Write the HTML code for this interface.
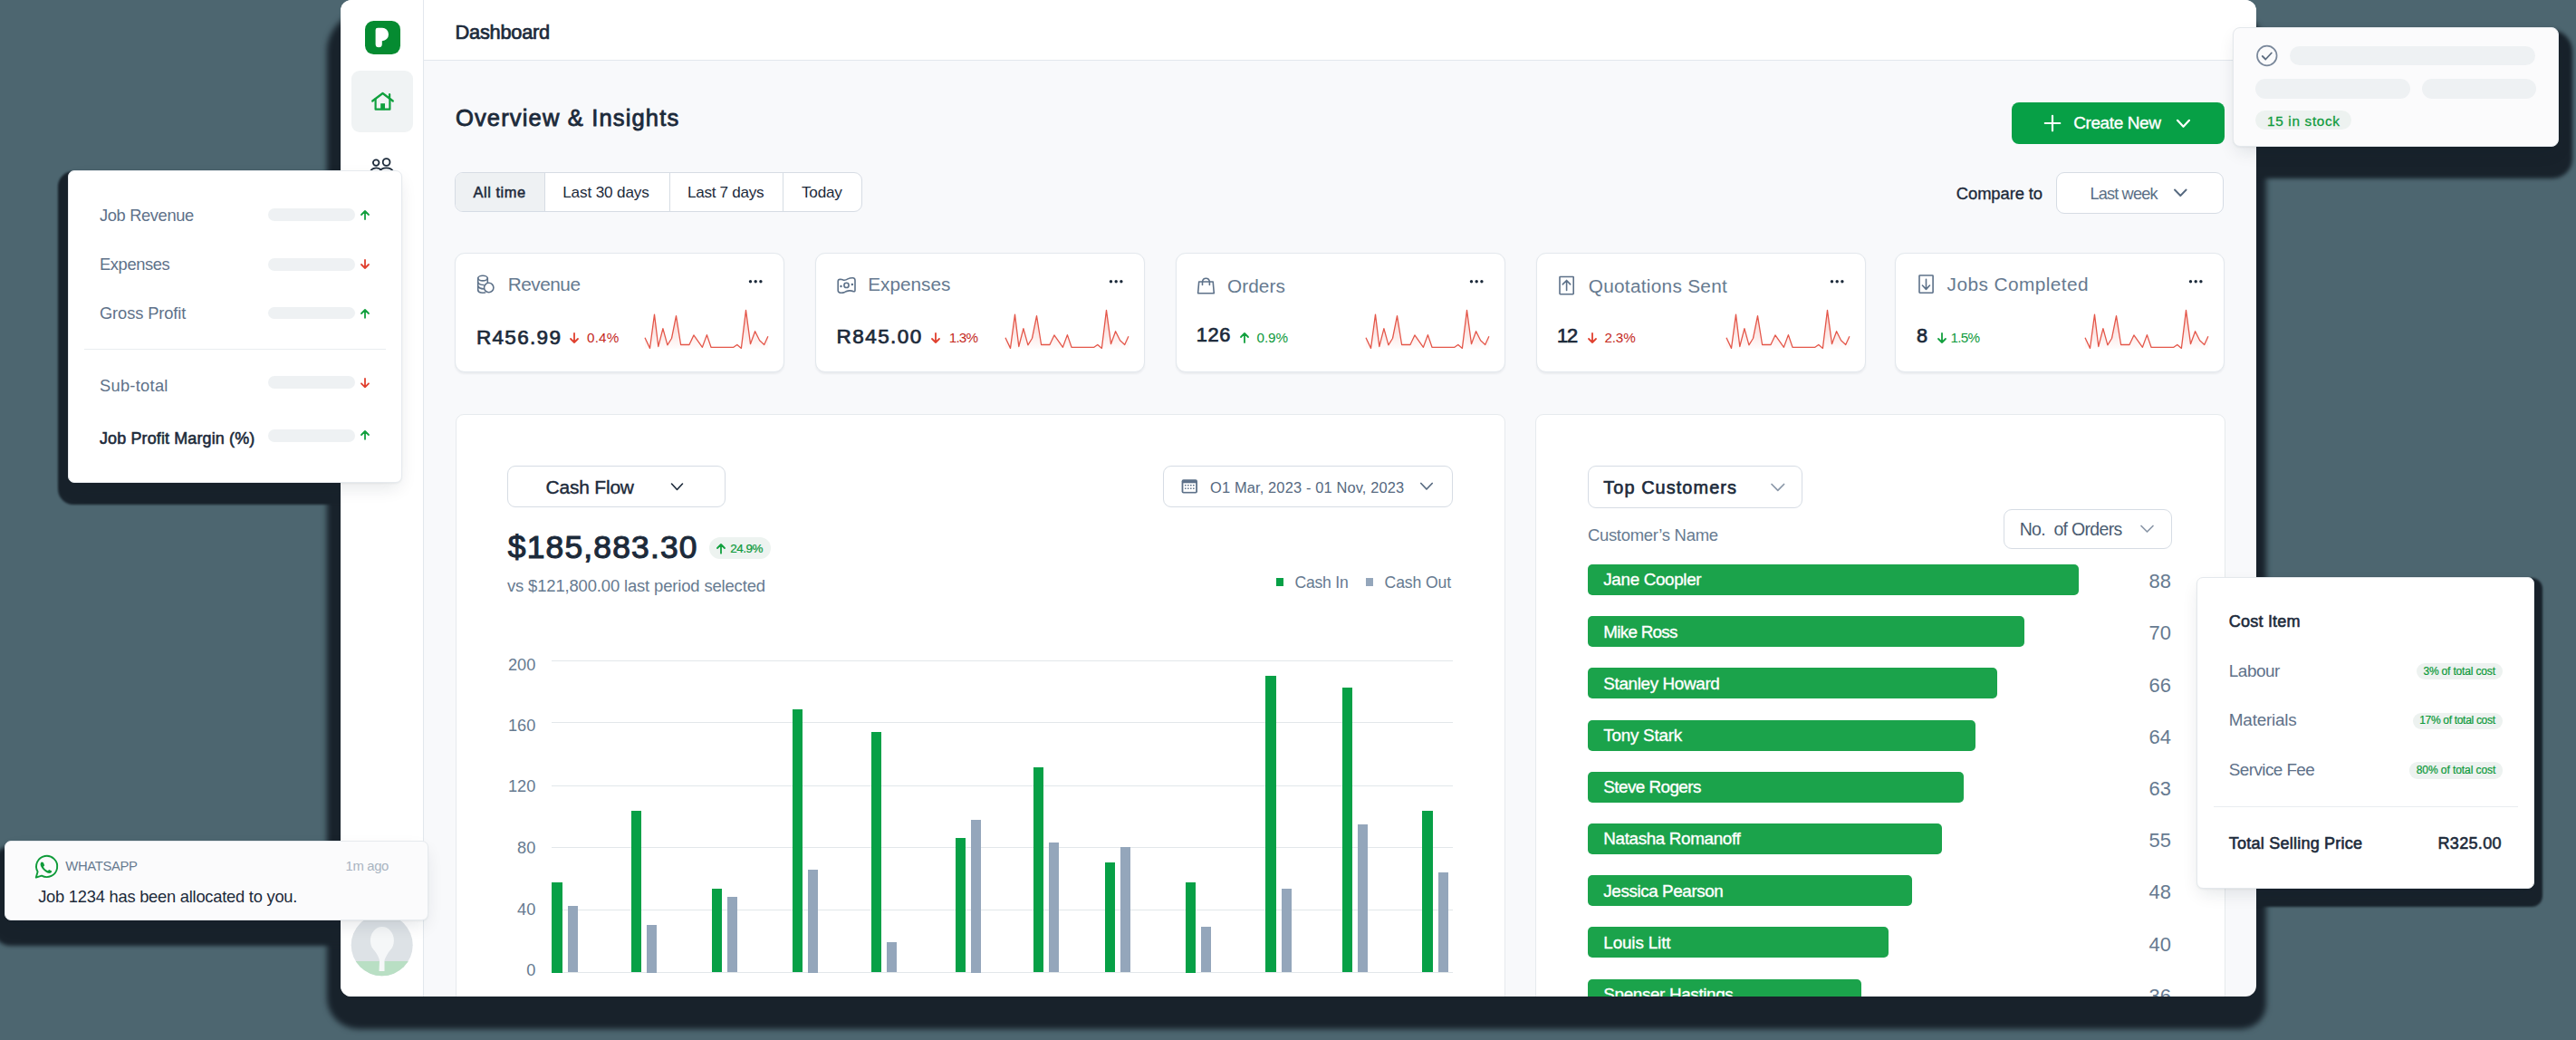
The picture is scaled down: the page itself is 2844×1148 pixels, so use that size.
<!DOCTYPE html>
<html><head><meta charset="utf-8"><style>
html,body{margin:0;padding:0;width:2844px;height:1148px;overflow:hidden;background:#4d6670}
body{position:relative;font-family:"Liberation Sans",sans-serif}
.t{position:absolute;white-space:pre}
</style></head><body>
<div style="position:absolute;left:361.00px;top:12.00px;width:2141.00px;height:1124.00px;background:#18222b;border-radius:45px 45px 28px 35px;filter:blur(3.0px)"></div>
<div style="position:absolute;left:63.50px;top:189.00px;width:436.50px;height:367.50px;background:#18222b;border-radius:17px;filter:blur(1.2px)"></div>
<div style="position:absolute;left:-8.00px;top:934.00px;width:528.00px;height:110.00px;background:#18222b;border-radius:20px;filter:blur(2.0px)"></div>
<div style="position:absolute;left:2440.00px;top:638.00px;width:367.00px;height:363.00px;background:#18222b;border-radius:12px;filter:blur(1.2px)"></div>
<div style="position:absolute;left:2440.00px;top:33.00px;width:400.00px;height:164.00px;background:#18222b;border-radius:22px 24px 22px 12px;filter:blur(2.0px)"></div>
<div style="position:absolute;left:0;top:0;width:2844px;height:1148px;clip-path:inset(0px 353px 48px 376px round 12px)">
<div style="position:absolute;left:376.00px;top:0.00px;width:2115.00px;height:1100.00px;background:#f8f9fb"></div>
<div style="position:absolute;left:376.00px;top:0.00px;width:92.00px;height:1100.00px;background:#ffffff;border-right:1px solid #e2e7ed;box-sizing:border-box"></div>
<div style="position:absolute;left:468.00px;top:0.00px;width:2023.00px;height:67.00px;background:#ffffff;border-bottom:1px solid #e2e7ed;box-sizing:border-box"></div>
<div style="position:absolute;left:403.30px;top:22.80px;width:39.20px;height:37.20px;background:#058b31;border-radius:9.5px"></div>
<svg style="position:absolute;left:403.00px;top:23.00px;overflow:visible" width="38.00" height="38.00" viewBox="403.00 23.00 38.00 38.00"><path d="M414.6 33 Q414.6 30.7 417 30.7 H422 A7 7.25 0 0 1 422 45.2 H421.8 V48.7 A3.6 3.6 0 0 1 414.6 48.7 Z" fill="#ffffff"/></svg>
<div style="position:absolute;left:387.50px;top:77.50px;width:68.50px;height:68.10px;background:#f0f3f4;border-radius:9px"></div>
<svg style="position:absolute;left:405.00px;top:98.00px;overflow:visible" width="35.00" height="28.00" viewBox="405.00 98.00 35.00 28.00"><g fill="none" stroke="#10a03e" stroke-width="2.2" stroke-linecap="round" stroke-linejoin="round"><path d="M411.2 111.5 L422.5 103 L433.8 111.5"/><path d="M414.6 109.2 V120.7 H430.4 V109.2"/><path d="M430.1 104.2 V107.6"/></g><rect x="420.2" y="114.2" width="4.8" height="7" fill="#10a03e"/></svg>
<svg style="position:absolute;left:405.00px;top:170.00px;overflow:visible" width="35.00" height="25.00" viewBox="405.00 170.00 35.00 25.00"><g fill="none" stroke="#1c2a3a" stroke-width="1.8"><circle cx="415.2" cy="179.6" r="3.3"/><circle cx="426.6" cy="179.0" r="3.9"/><path d="M408.5 190 A7 6 0 0 1 421 188"/><path d="M418.5 190 A8.5 7 0 0 1 434.5 190"/></g></svg>
<svg style="position:absolute;left:386.00px;top:1008.00px;overflow:visible" width="72.00" height="74.00" viewBox="386.00 1008.00 72.00 74.00"><defs><clipPath id="avc"><circle cx="421.7" cy="1043.3" r="34"/></clipPath></defs><g clip-path="url(#avc)"><rect x="386" y="1008" width="72" height="74" fill="#dde2e6"/><rect x="386" y="1061" width="72" height="30" fill="#b9dfc4"/><ellipse cx="421.9" cy="1038" rx="13" ry="15" fill="#f5f7f8"/><path d="M410.5 1045 Q418 1055 419 1060 L418.5 1072 L424.5 1072 L424.5 1060 Q426 1055 433.3 1045 Z" fill="#f5f7f8"/></g></svg>
<div style="position:absolute;left:502.00px;top:190.40px;width:450.00px;height:43.20px;background:#ffffff;border:1px solid #d6dce4;border-radius:9px;box-sizing:border-box"></div>
<div style="position:absolute;left:503.00px;top:191.40px;width:97.50px;height:41.20px;background:#eef1f3;border-radius:8px 0 0 8px"></div>
<div style="position:absolute;left:600.50px;top:191.40px;width:1.00px;height:41.20px;background:#d6dce4"></div>
<div style="position:absolute;left:738.50px;top:191.40px;width:1.00px;height:41.20px;background:#d6dce4"></div>
<div style="position:absolute;left:864.40px;top:191.40px;width:1.00px;height:41.20px;background:#d6dce4"></div>
<div style="position:absolute;left:2220.70px;top:112.60px;width:235.40px;height:46.30px;background:#07a046;border-radius:8px"></div>
<svg style="position:absolute;left:2255.00px;top:126.00px;overflow:visible" width="165.00" height="20.00" viewBox="2255.00 126.00 165.00 20.00"><g fill="none" stroke="#ffffff" stroke-width="2.2" stroke-linecap="round" stroke-linejoin="round"><path d="M2266 127.8 V144.3 M2257.8 136 H2274.3"/><path d="M2404 132.8 L2410.5 139.8 L2417 132.8"/></g></svg>
<div style="position:absolute;left:2269.80px;top:190.00px;width:185.70px;height:46.00px;background:#ffffff;border:1px solid #d6dce4;border-radius:9px;box-sizing:border-box"></div>
<svg style="position:absolute;left:2398.00px;top:204.00px;overflow:visible" width="20.00" height="14.00" viewBox="2398.00 204.00 20.00 14.00"><path d="M2401 209.5 L2407.3 216 L2413.6 209.5" fill="none" stroke="#56697f" stroke-width="1.9" stroke-linecap="round" stroke-linejoin="round"/></svg>
<svg width="0" height="0" style="position:absolute"><defs><linearGradient id="sg" x1="0" y1="0" x2="0" y2="1"><stop offset="0" stop-color="#ef8a80" stop-opacity="0.45"/><stop offset="1" stop-color="#ef8a80" stop-opacity="0.02"/></linearGradient></defs></svg>
<div style="position:absolute;left:502.40px;top:279.30px;width:364.00px;height:132.00px;background:#ffffff;border:1px solid #e3e8ed;border-radius:11px;box-sizing:border-box;box-shadow:0 1.5px 2px rgba(30,45,60,0.06)"></div>
<svg style="position:absolute;left:822.40px;top:305.00px;overflow:visible" width="25.00" height="11.00" viewBox="822.40 305.00 25.00 11.00"><g fill="#1c2a3a"><circle cx="828.90" cy="310.7" r="1.7"/><circle cx="834.60" cy="310.7" r="1.7"/><circle cx="840.30" cy="310.7" r="1.7"/></g></svg>
<svg style="position:absolute;left:710.40px;top:338.60px;overflow:visible" width="142.00" height="48.00" viewBox="710.40 338.60 142.00 48.00"><polygon points="712.40,372.30 717.90,384.00 722.90,346.70 727.20,382.10 732.30,362.20 737.30,380.50 741.90,373.10 746.90,348.20 752.00,380.10 761.40,380.10 766.30,369.50 775.80,382.90 780.80,369.20 785.40,382.90 810.30,382.90 814.20,380.10 818.80,384.00 823.90,342.00 828.90,379.30 834.00,365.30 839.00,375.40 844.10,380.10 848.30,370.80 848.30,384.60 712.40,384.60" fill="url(#sg)"/><polyline points="712.40,372.30 717.90,384.00 722.90,346.70 727.20,382.10 732.30,362.20 737.30,380.50 741.90,373.10 746.90,348.20 752.00,380.10 761.40,380.10 766.30,369.50 775.80,382.90 780.80,369.20 785.40,382.90 810.30,382.90 814.20,380.10 818.80,384.00 823.90,342.00 828.90,379.30 834.00,365.30 839.00,375.40 844.10,380.10 848.30,370.80" fill="none" stroke="#e4574a" stroke-width="1.3" stroke-linejoin="round"/></svg>
<div style="position:absolute;left:900.20px;top:279.30px;width:364.00px;height:132.00px;background:#ffffff;border:1px solid #e3e8ed;border-radius:11px;box-sizing:border-box;box-shadow:0 1.5px 2px rgba(30,45,60,0.06)"></div>
<svg style="position:absolute;left:1220.20px;top:305.00px;overflow:visible" width="25.00" height="11.00" viewBox="1220.20 305.00 25.00 11.00"><g fill="#1c2a3a"><circle cx="1226.70" cy="310.7" r="1.7"/><circle cx="1232.40" cy="310.7" r="1.7"/><circle cx="1238.10" cy="310.7" r="1.7"/></g></svg>
<svg style="position:absolute;left:1108.20px;top:338.60px;overflow:visible" width="142.00" height="48.00" viewBox="1108.20 338.60 142.00 48.00"><polygon points="1110.20,372.30 1115.70,384.00 1120.70,346.70 1125.00,382.10 1130.10,362.20 1135.10,380.50 1139.70,373.10 1144.70,348.20 1149.80,380.10 1159.20,380.10 1164.10,369.50 1173.60,382.90 1178.60,369.20 1183.20,382.90 1208.10,382.90 1212.00,380.10 1216.60,384.00 1221.70,342.00 1226.70,379.30 1231.80,365.30 1236.80,375.40 1241.90,380.10 1246.10,370.80 1246.10,384.60 1110.20,384.60" fill="url(#sg)"/><polyline points="1110.20,372.30 1115.70,384.00 1120.70,346.70 1125.00,382.10 1130.10,362.20 1135.10,380.50 1139.70,373.10 1144.70,348.20 1149.80,380.10 1159.20,380.10 1164.10,369.50 1173.60,382.90 1178.60,369.20 1183.20,382.90 1208.10,382.90 1212.00,380.10 1216.60,384.00 1221.70,342.00 1226.70,379.30 1231.80,365.30 1236.80,375.40 1241.90,380.10 1246.10,370.80" fill="none" stroke="#e4574a" stroke-width="1.3" stroke-linejoin="round"/></svg>
<div style="position:absolute;left:1297.50px;top:279.30px;width:364.00px;height:132.00px;background:#ffffff;border:1px solid #e3e8ed;border-radius:11px;box-sizing:border-box;box-shadow:0 1.5px 2px rgba(30,45,60,0.06)"></div>
<svg style="position:absolute;left:1617.50px;top:305.00px;overflow:visible" width="25.00" height="11.00" viewBox="1617.50 305.00 25.00 11.00"><g fill="#1c2a3a"><circle cx="1624.00" cy="310.7" r="1.7"/><circle cx="1629.70" cy="310.7" r="1.7"/><circle cx="1635.40" cy="310.7" r="1.7"/></g></svg>
<svg style="position:absolute;left:1505.50px;top:338.60px;overflow:visible" width="142.00" height="48.00" viewBox="1505.50 338.60 142.00 48.00"><polygon points="1507.50,372.30 1513.00,384.00 1518.00,346.70 1522.30,382.10 1527.40,362.20 1532.40,380.50 1537.00,373.10 1542.00,348.20 1547.10,380.10 1556.50,380.10 1561.40,369.50 1570.90,382.90 1575.90,369.20 1580.50,382.90 1605.40,382.90 1609.30,380.10 1613.90,384.00 1619.00,342.00 1624.00,379.30 1629.10,365.30 1634.10,375.40 1639.20,380.10 1643.40,370.80 1643.40,384.60 1507.50,384.60" fill="url(#sg)"/><polyline points="1507.50,372.30 1513.00,384.00 1518.00,346.70 1522.30,382.10 1527.40,362.20 1532.40,380.50 1537.00,373.10 1542.00,348.20 1547.10,380.10 1556.50,380.10 1561.40,369.50 1570.90,382.90 1575.90,369.20 1580.50,382.90 1605.40,382.90 1609.30,380.10 1613.90,384.00 1619.00,342.00 1624.00,379.30 1629.10,365.30 1634.10,375.40 1639.20,380.10 1643.40,370.80" fill="none" stroke="#e4574a" stroke-width="1.3" stroke-linejoin="round"/></svg>
<div style="position:absolute;left:1695.60px;top:279.30px;width:364.00px;height:132.00px;background:#ffffff;border:1px solid #e3e8ed;border-radius:11px;box-sizing:border-box;box-shadow:0 1.5px 2px rgba(30,45,60,0.06)"></div>
<svg style="position:absolute;left:2015.60px;top:305.00px;overflow:visible" width="25.00" height="11.00" viewBox="2015.60 305.00 25.00 11.00"><g fill="#1c2a3a"><circle cx="2022.10" cy="310.7" r="1.7"/><circle cx="2027.80" cy="310.7" r="1.7"/><circle cx="2033.50" cy="310.7" r="1.7"/></g></svg>
<svg style="position:absolute;left:1903.60px;top:338.60px;overflow:visible" width="142.00" height="48.00" viewBox="1903.60 338.60 142.00 48.00"><polygon points="1905.60,372.30 1911.10,384.00 1916.10,346.70 1920.40,382.10 1925.50,362.20 1930.50,380.50 1935.10,373.10 1940.10,348.20 1945.20,380.10 1954.60,380.10 1959.50,369.50 1969.00,382.90 1974.00,369.20 1978.60,382.90 2003.50,382.90 2007.40,380.10 2012.00,384.00 2017.10,342.00 2022.10,379.30 2027.20,365.30 2032.20,375.40 2037.30,380.10 2041.50,370.80 2041.50,384.60 1905.60,384.60" fill="url(#sg)"/><polyline points="1905.60,372.30 1911.10,384.00 1916.10,346.70 1920.40,382.10 1925.50,362.20 1930.50,380.50 1935.10,373.10 1940.10,348.20 1945.20,380.10 1954.60,380.10 1959.50,369.50 1969.00,382.90 1974.00,369.20 1978.60,382.90 2003.50,382.90 2007.40,380.10 2012.00,384.00 2017.10,342.00 2022.10,379.30 2027.20,365.30 2032.20,375.40 2037.30,380.10 2041.50,370.80" fill="none" stroke="#e4574a" stroke-width="1.3" stroke-linejoin="round"/></svg>
<div style="position:absolute;left:2092.20px;top:279.30px;width:364.00px;height:132.00px;background:#ffffff;border:1px solid #e3e8ed;border-radius:11px;box-sizing:border-box;box-shadow:0 1.5px 2px rgba(30,45,60,0.06)"></div>
<svg style="position:absolute;left:2412.20px;top:305.00px;overflow:visible" width="25.00" height="11.00" viewBox="2412.20 305.00 25.00 11.00"><g fill="#1c2a3a"><circle cx="2418.70" cy="310.7" r="1.7"/><circle cx="2424.40" cy="310.7" r="1.7"/><circle cx="2430.10" cy="310.7" r="1.7"/></g></svg>
<svg style="position:absolute;left:2300.20px;top:338.60px;overflow:visible" width="142.00" height="48.00" viewBox="2300.20 338.60 142.00 48.00"><polygon points="2302.20,372.30 2307.70,384.00 2312.70,346.70 2317.00,382.10 2322.10,362.20 2327.10,380.50 2331.70,373.10 2336.70,348.20 2341.80,380.10 2351.20,380.10 2356.10,369.50 2365.60,382.90 2370.60,369.20 2375.20,382.90 2400.10,382.90 2404.00,380.10 2408.60,384.00 2413.70,342.00 2418.70,379.30 2423.80,365.30 2428.80,375.40 2433.90,380.10 2438.10,370.80 2438.10,384.60 2302.20,384.60" fill="url(#sg)"/><polyline points="2302.20,372.30 2307.70,384.00 2312.70,346.70 2317.00,382.10 2322.10,362.20 2327.10,380.50 2331.70,373.10 2336.70,348.20 2341.80,380.10 2351.20,380.10 2356.10,369.50 2365.60,382.90 2370.60,369.20 2375.20,382.90 2400.10,382.90 2404.00,380.10 2408.60,384.00 2413.70,342.00 2418.70,379.30 2423.80,365.30 2428.80,375.40 2433.90,380.10 2438.10,370.80" fill="none" stroke="#e4574a" stroke-width="1.3" stroke-linejoin="round"/></svg>
<svg style="position:absolute;left:520.00px;top:298.00px;overflow:visible" width="32.00" height="32.00" viewBox="520.00 298.00 32.00 32.00"><g fill="none" stroke="#5d7189" stroke-width="1.6" stroke-linecap="round" stroke-linejoin="round"><ellipse cx="533" cy="307.1" rx="5.3" ry="2.8"/><path d="M527.7 307.1 V320.5"/><path d="M538.3 307.1 V311.6"/><path d="M527.7 311.8 Q529.3 314.4 533.8 314.5"/><path d="M527.7 316.3 Q529.3 318.7 533.4 318.9"/><path d="M527.7 320.5 Q528.4 323.2 533 323.2 L535.6 323"/><circle cx="539.7" cy="317.5" r="5.2"/></g></svg>
<svg style="position:absolute;left:920.00px;top:300.00px;overflow:visible" width="30.00" height="32.00" viewBox="920.00 300.00 30.00 32.00"><g fill="none" stroke="#5d7189" stroke-width="1.6" stroke-linecap="round" stroke-linejoin="round"><path d="M925.2 310.5 Q925.2 308.4 927.5 308.3 Q929.3 308.6 931 309.1 Q933.5 309.6 936 307.9 Q938.5 306.7 941.5 306.8 Q944 307.1 944 309.5 V320.2 Q944 322.2 942.3 321.7 Q940.2 320.7 937.6 320.9 Q935 321.2 932.6 322.4 Q930 323.5 927.5 323.1 Q925.2 322.6 925.2 320.5 Z"/><circle cx="934.5" cy="314.9" r="2.6"/></g><circle cx="928.5" cy="315.9" r="1.25" fill="#5d7189"/><circle cx="940.9" cy="314" r="1.25" fill="#5d7189"/></svg>
<svg style="position:absolute;left:1318.00px;top:300.00px;overflow:visible" width="28.00" height="30.00" viewBox="1318.00 300.00 28.00 30.00"><g fill="none" stroke="#5d7189" stroke-width="1.6" stroke-linecap="round" stroke-linejoin="round"><path d="M1323.7 311 H1339.2 L1340.3 323.8 H1322.6 Z"/><path d="M1327.5 314.5 V311 A4 4.5 0 0 1 1335.4 311 V314.5"/></g></svg>
<svg style="position:absolute;left:1716.00px;top:300.00px;overflow:visible" width="28.00" height="30.00" viewBox="1716.00 300.00 28.00 30.00"><g fill="none" stroke="#5d7189" stroke-width="1.6" stroke-linecap="round" stroke-linejoin="round"><rect x="1722" y="305.5" width="15.2" height="19.2" rx="0.6"/><path d="M1729.6 320.5 V309.5 M1725.3 313.9 L1729.6 309.5 L1733.7 313.9"/></g></svg>
<svg style="position:absolute;left:2112.00px;top:300.00px;overflow:visible" width="28.00" height="30.00" viewBox="2112.00 300.00 28.00 30.00"><g fill="none" stroke="#5d7189" stroke-width="1.6" stroke-linecap="round" stroke-linejoin="round"><rect x="2119" y="304" width="15.1" height="19.2" rx="0.6"/><path d="M2126.5 308.4 V319.4 M2122.4 315 L2126.5 319.4 L2130.5 315"/></g></svg>
<svg style="position:absolute;left:628.20px;top:365.50px;overflow:visible" width="12.00" height="14.00" viewBox="628.20 365.50 12.00 14.00"><path d="M634.20 367.50 V377.50 M630.20 373.50 L634.20 377.50 L638.20 373.50" fill="none" stroke="#e0402f" stroke-width="1.8" stroke-linecap="round" stroke-linejoin="round"/></svg>
<svg style="position:absolute;left:1026.70px;top:365.50px;overflow:visible" width="12.00" height="14.00" viewBox="1026.70 365.50 12.00 14.00"><path d="M1032.70 367.50 V377.50 M1028.70 373.50 L1032.70 377.50 L1036.70 373.50" fill="none" stroke="#e0402f" stroke-width="1.8" stroke-linecap="round" stroke-linejoin="round"/></svg>
<svg style="position:absolute;left:1367.70px;top:365.50px;overflow:visible" width="12.00" height="14.00" viewBox="1367.70 365.50 12.00 14.00"><path d="M1373.70 377.50 V367.50 M1369.70 371.50 L1373.70 367.50 L1377.70 371.50" fill="none" stroke="#12a03e" stroke-width="1.8" stroke-linecap="round" stroke-linejoin="round"/></svg>
<svg style="position:absolute;left:1751.50px;top:365.50px;overflow:visible" width="12.00" height="14.00" viewBox="1751.50 365.50 12.00 14.00"><path d="M1757.50 367.50 V377.50 M1753.50 373.50 L1757.50 377.50 L1761.50 373.50" fill="none" stroke="#e0402f" stroke-width="1.8" stroke-linecap="round" stroke-linejoin="round"/></svg>
<svg style="position:absolute;left:2138.20px;top:365.50px;overflow:visible" width="12.00" height="14.00" viewBox="2138.20 365.50 12.00 14.00"><path d="M2144.20 367.50 V377.50 M2140.20 373.50 L2144.20 377.50 L2148.20 373.50" fill="none" stroke="#12a03e" stroke-width="1.8" stroke-linecap="round" stroke-linejoin="round"/></svg>
<div style="position:absolute;left:502.50px;top:457.00px;width:1159.00px;height:683.00px;background:#ffffff;border:1px solid #e6eaed;border-radius:9px;box-sizing:border-box"></div>
<div style="position:absolute;left:560.00px;top:514.00px;width:241.00px;height:46.00px;background:#ffffff;border:1px solid #d6dce4;border-radius:9px;box-sizing:border-box"></div>
<svg style="position:absolute;left:738.00px;top:530.00px;overflow:visible" width="20.00" height="15.00" viewBox="738.00 530.00 20.00 15.00"><path d="M741.5 534 L747.5 540.5 L753.5 534" fill="none" stroke="#1c2a3a" stroke-width="1.6" stroke-linecap="round" stroke-linejoin="round"/></svg>
<div style="position:absolute;left:1284.00px;top:514.40px;width:319.50px;height:45.30px;background:#ffffff;border:1px solid #d6dce4;border-radius:9px;box-sizing:border-box"></div>
<svg style="position:absolute;left:1302.00px;top:527.00px;overflow:visible" width="23.00" height="20.00" viewBox="1302.00 527.00 23.00 20.00"><rect x="1304.6" y="529.2" width="17.4" height="15.4" rx="2" fill="#5d7189"/><rect x="1306.4" y="533.3" width="13.8" height="9.6" fill="#ffffff"/><g fill="#5d7189"><rect x="1308" y="535" width="1.6" height="1.4"/><rect x="1311" y="535" width="1.6" height="1.4"/><rect x="1314" y="535" width="1.6" height="1.4"/><rect x="1317" y="535" width="1.6" height="1.4"/><rect x="1308" y="538.5" width="1.6" height="1.4"/><rect x="1311" y="538.5" width="1.6" height="1.4"/><rect x="1314" y="538.5" width="1.6" height="1.4"/><rect x="1317" y="538.5" width="1.6" height="1.4"/></g></svg>
<svg style="position:absolute;left:1565.00px;top:530.00px;overflow:visible" width="20.00" height="15.00" viewBox="1565.00 530.00 20.00 15.00"><path d="M1568.8 533.5 L1575 540 L1581.2 533.5" fill="none" stroke="#56697f" stroke-width="1.7" stroke-linecap="round" stroke-linejoin="round"/></svg>
<div style="position:absolute;left:783.00px;top:593.00px;width:67.75px;height:23.75px;background:#edf3f0;border-radius:12px"></div>
<svg style="position:absolute;left:789.60px;top:598.50px;overflow:visible" width="12.00" height="13.70" viewBox="789.60 598.50 12.00 13.70"><path d="M795.60 610.20 V600.50 M791.60 604.50 L795.60 600.50 L799.60 604.50" fill="none" stroke="#12a03e" stroke-width="1.8" stroke-linecap="round" stroke-linejoin="round"/></svg>
<div style="position:absolute;left:1408.90px;top:637.90px;width:8.60px;height:8.80px;background:#07a046"></div>
<div style="position:absolute;left:1507.80px;top:637.90px;width:8.20px;height:8.80px;background:#94a6bb"></div>
<div style="position:absolute;left:609.00px;top:728.70px;width:994.50px;height:1.20px;background:#e2e7ea"></div>
<div style="position:absolute;left:609.00px;top:797.30px;width:994.50px;height:1.20px;background:#e2e7ea"></div>
<div style="position:absolute;left:609.00px;top:866.70px;width:994.50px;height:1.20px;background:#e2e7ea"></div>
<div style="position:absolute;left:609.00px;top:935.30px;width:994.50px;height:1.20px;background:#e2e7ea"></div>
<div style="position:absolute;left:609.00px;top:1003.90px;width:994.50px;height:1.20px;background:#e2e7ea"></div>
<div style="position:absolute;left:609.00px;top:1072.50px;width:994.50px;height:1.20px;background:#e2e7ea"></div>
<div style="position:absolute;left:609.40px;top:974.00px;width:11.40px;height:99.50px;background:#07a046"></div>
<div style="position:absolute;left:697.00px;top:894.80px;width:11.40px;height:178.70px;background:#07a046"></div>
<div style="position:absolute;left:785.70px;top:981.10px;width:11.40px;height:92.40px;background:#07a046"></div>
<div style="position:absolute;left:874.80px;top:783.20px;width:11.40px;height:290.30px;background:#07a046"></div>
<div style="position:absolute;left:961.90px;top:807.60px;width:11.40px;height:265.90px;background:#07a046"></div>
<div style="position:absolute;left:1055.00px;top:925.20px;width:11.40px;height:148.30px;background:#07a046"></div>
<div style="position:absolute;left:1141.00px;top:846.70px;width:11.40px;height:226.80px;background:#07a046"></div>
<div style="position:absolute;left:1219.90px;top:952.40px;width:11.40px;height:121.10px;background:#07a046"></div>
<div style="position:absolute;left:1308.60px;top:974.00px;width:11.40px;height:99.50px;background:#07a046"></div>
<div style="position:absolute;left:1397.30px;top:746.10px;width:11.40px;height:327.40px;background:#07a046"></div>
<div style="position:absolute;left:1481.70px;top:759.10px;width:11.40px;height:314.40px;background:#07a046"></div>
<div style="position:absolute;left:1570.40px;top:895.20px;width:11.40px;height:178.30px;background:#07a046"></div>
<div style="position:absolute;left:626.70px;top:999.70px;width:11.10px;height:73.80px;background:#94a6bb"></div>
<div style="position:absolute;left:713.90px;top:1021.00px;width:11.10px;height:52.50px;background:#94a6bb"></div>
<div style="position:absolute;left:803.00px;top:989.80px;width:11.10px;height:83.70px;background:#94a6bb"></div>
<div style="position:absolute;left:891.70px;top:959.50px;width:11.10px;height:114.00px;background:#94a6bb"></div>
<div style="position:absolute;left:978.90px;top:1039.90px;width:11.10px;height:33.60px;background:#94a6bb"></div>
<div style="position:absolute;left:1072.30px;top:905.00px;width:11.10px;height:168.50px;background:#94a6bb"></div>
<div style="position:absolute;left:1158.40px;top:929.90px;width:11.10px;height:143.60px;background:#94a6bb"></div>
<div style="position:absolute;left:1237.20px;top:935.40px;width:11.10px;height:138.10px;background:#94a6bb"></div>
<div style="position:absolute;left:1326.00px;top:1022.60px;width:11.10px;height:50.90px;background:#94a6bb"></div>
<div style="position:absolute;left:1414.70px;top:981.20px;width:11.10px;height:92.30px;background:#94a6bb"></div>
<div style="position:absolute;left:1499.00px;top:909.80px;width:11.10px;height:163.70px;background:#94a6bb"></div>
<div style="position:absolute;left:1587.80px;top:962.60px;width:11.10px;height:110.90px;background:#94a6bb"></div>
<div style="position:absolute;left:1695.00px;top:457.00px;width:761.50px;height:683.00px;background:#ffffff;border:1px solid #e6eaed;border-radius:9px;box-sizing:border-box"></div>
<div style="position:absolute;left:1752.90px;top:514.20px;width:237.10px;height:46.90px;background:#ffffff;border:1px solid #d6dce4;border-radius:9px;box-sizing:border-box"></div>
<svg style="position:absolute;left:1952.00px;top:531.00px;overflow:visible" width="22.00" height="14.00" viewBox="1952.00 531.00 22.00 14.00"><path d="M1956 534.5 L1962.8 541.3 L1969.6 534.5" fill="none" stroke="#8a97a8" stroke-width="1.7" stroke-linecap="round" stroke-linejoin="round"/></svg>
<div style="position:absolute;left:2212.20px;top:561.70px;width:186.20px;height:43.90px;background:#ffffff;border:1px solid #d6dce4;border-radius:9px;box-sizing:border-box"></div>
<svg style="position:absolute;left:2360.00px;top:577.00px;overflow:visible" width="22.00" height="14.00" viewBox="2360.00 577.00 22.00 14.00"><path d="M2364 580.5 L2370.5 587 L2377 580.5" fill="none" stroke="#8a97a8" stroke-width="1.7" stroke-linecap="round" stroke-linejoin="round"/></svg>
<div style="position:absolute;left:1753.00px;top:623.00px;width:542.00px;height:34.00px;background:#1ba34b;border-radius:5px"></div>
<div style="position:absolute;left:1753.00px;top:680.20px;width:482.00px;height:34.00px;background:#1ba34b;border-radius:5px"></div>
<div style="position:absolute;left:1753.00px;top:737.40px;width:452.10px;height:34.00px;background:#1ba34b;border-radius:5px"></div>
<div style="position:absolute;left:1753.00px;top:794.60px;width:427.70px;height:34.00px;background:#1ba34b;border-radius:5px"></div>
<div style="position:absolute;left:1753.00px;top:851.80px;width:415.00px;height:34.00px;background:#1ba34b;border-radius:5px"></div>
<div style="position:absolute;left:1753.00px;top:909.00px;width:390.60px;height:34.00px;background:#1ba34b;border-radius:5px"></div>
<div style="position:absolute;left:1753.00px;top:966.20px;width:357.90px;height:34.00px;background:#1ba34b;border-radius:5px"></div>
<div style="position:absolute;left:1753.00px;top:1023.40px;width:331.90px;height:34.00px;background:#1ba34b;border-radius:5px"></div>
<div style="position:absolute;left:1753.00px;top:1080.60px;width:301.50px;height:34.00px;background:#1ba34b;border-radius:5px"></div>
<div class="t" style="left:502.60px;top:21.74px;font-size:21.81px;line-height:27px;color:#1c2a3a;letter-spacing:-0.255px;-webkit-text-stroke:0.70px #1c2a3a">Dashboard</div>
<div class="t" style="left:502.90px;top:114.04px;font-size:25.56px;line-height:32px;color:#1c2a3a;letter-spacing:1.142px;-webkit-text-stroke:0.82px #1c2a3a">Overview &amp; Insights</div>
<div class="t" style="left:522.50px;top:202.42px;font-size:16.39px;line-height:20px;color:#1c2a3a;letter-spacing:0.559px;-webkit-text-stroke:0.52px #1c2a3a">All time</div>
<div class="t" style="left:621.20px;top:201.66px;font-size:17.15px;line-height:21px;color:#1c2a3a;letter-spacing:-0.137px">Last 30 days</div>
<div class="t" style="left:759.10px;top:201.66px;font-size:17.15px;line-height:21px;color:#1c2a3a;letter-spacing:-0.327px">Last 7 days</div>
<div class="t" style="left:885.00px;top:201.66px;font-size:17.15px;line-height:21px;color:#1c2a3a;letter-spacing:-0.213px">Today</div>
<div class="t" style="left:2289.20px;top:124.42px;font-size:18.98px;line-height:24px;color:#ffffff;letter-spacing:-0.384px;-webkit-text-stroke:0.34px #ffffff">Create New</div>
<div class="t" style="left:2159.80px;top:202.12px;font-size:18.41px;line-height:23px;color:#1c2a3a;letter-spacing:-0.097px;-webkit-text-stroke:0.33px #1c2a3a">Compare to</div>
<div class="t" style="left:2307.40px;top:203.20px;font-size:18.17px;line-height:23px;color:#5b6f86;letter-spacing:-0.831px">Last week</div>
<div class="t" style="left:560.70px;top:300.60px;font-size:20.79px;line-height:26px;color:#667a90;letter-spacing:-0.481px">Revenue</div>
<div class="t" style="left:958.30px;top:301.00px;font-size:20.79px;line-height:26px;color:#667a90;letter-spacing:-0.038px">Expenses</div>
<div class="t" style="left:1354.90px;top:302.60px;font-size:20.79px;line-height:26px;color:#667a90;letter-spacing:0.097px">Orders</div>
<div class="t" style="left:1753.70px;top:302.60px;font-size:20.79px;line-height:26px;color:#667a90;letter-spacing:0.291px">Quotations Sent</div>
<div class="t" style="left:2149.60px;top:301.00px;font-size:20.79px;line-height:26px;color:#667a90;letter-spacing:0.441px">Jobs Completed</div>
<div class="t" style="left:526.00px;top:359.20px;font-size:22.50px;line-height:28px;color:#1c2a3a;letter-spacing:1.304px;-webkit-text-stroke:0.72px #1c2a3a">R456.99</div>
<div class="t" style="left:923.50px;top:358.40px;font-size:22.50px;line-height:28px;color:#1c2a3a;letter-spacing:1.454px;-webkit-text-stroke:0.72px #1c2a3a">R845.00</div>
<div class="t" style="left:1320.70px;top:356.04px;font-size:21.81px;line-height:27px;color:#1c2a3a;letter-spacing:0.613px;-webkit-text-stroke:0.70px #1c2a3a">126</div>
<div class="t" style="left:1718.90px;top:356.74px;font-size:21.81px;line-height:27px;color:#1c2a3a;letter-spacing:-0.950px;-webkit-text-stroke:0.70px #1c2a3a">12</div>
<div class="t" style="left:2116.10px;top:356.74px;font-size:21.81px;line-height:27px;color:#1c2a3a;-webkit-text-stroke:0.70px #1c2a3a">8</div>
<div class="t" style="left:648.00px;top:363.21px;font-size:15.26px;line-height:19px;color:#c4291d;letter-spacing:0.178px">0.4%</div>
<div class="t" style="left:1047.80px;top:363.21px;font-size:15.26px;line-height:19px;color:#c4291d;letter-spacing:-0.855px">1.3%</div>
<div class="t" style="left:1387.50px;top:363.31px;font-size:15.26px;line-height:19px;color:#0e9a3b;letter-spacing:-0.089px">0.9%</div>
<div class="t" style="left:1771.40px;top:363.21px;font-size:15.26px;line-height:19px;color:#c4291d;letter-spacing:-0.122px">2.3%</div>
<div class="t" style="left:2153.40px;top:363.21px;font-size:15.26px;line-height:19px;color:#0e9a3b;letter-spacing:-0.722px">1.5%</div>
<div class="t" style="left:602.50px;top:525.24px;font-size:20.96px;line-height:26px;color:#1c2a3a;letter-spacing:-0.186px;-webkit-text-stroke:0.38px #1c2a3a">Cash Flow</div>
<div class="t" style="left:1336.00px;top:527.61px;font-size:16.42px;line-height:21px;color:#56697f;letter-spacing:0.147px">O1 Mar, 2023 - 01 Nov, 2023</div>
<div class="t" style="left:560.75px;top:581.98px;font-size:35.42px;line-height:44px;color:#1c2a3a;letter-spacing:1.184px;-webkit-text-stroke:1.13px #1c2a3a">$185,883.30</div>
<div class="t" style="left:806.25px;top:596.84px;font-size:13.46px;line-height:17px;color:#0e9a3b;letter-spacing:-0.477px;-webkit-text-stroke:0.24px #0e9a3b">24.9%</div>
<div class="t" style="left:560.00px;top:635.35px;font-size:18.46px;line-height:23px;color:#667a90;letter-spacing:-0.149px">vs $121,800.00 last period selected</div>
<div class="t" style="left:1429.40px;top:631.71px;font-size:17.59px;line-height:22px;color:#667a90;letter-spacing:-0.199px">Cash In</div>
<div class="t" style="left:1528.60px;top:631.71px;font-size:17.59px;line-height:22px;color:#667a90;letter-spacing:-0.109px">Cash Out</div>
<div class="t" style="left:561.00px;top:722.80px;font-size:18.17px;line-height:23px;color:#667a90">200</div>
<div class="t" style="left:561.00px;top:789.80px;font-size:18.17px;line-height:23px;color:#667a90">160</div>
<div class="t" style="left:561.00px;top:856.90px;font-size:18.17px;line-height:23px;color:#667a90">120</div>
<div class="t" style="left:571.10px;top:925.10px;font-size:18.17px;line-height:23px;color:#667a90">80</div>
<div class="t" style="left:571.10px;top:992.90px;font-size:18.17px;line-height:23px;color:#667a90">40</div>
<div class="t" style="left:581.19px;top:1059.90px;font-size:18.17px;line-height:23px;color:#667a90">0</div>
<div class="t" style="left:1770.30px;top:526.42px;font-size:19.86px;line-height:25px;color:#1c2a3a;letter-spacing:1.088px;-webkit-text-stroke:0.64px #1c2a3a">Top Customers</div>
<div class="t" style="left:1752.90px;top:578.50px;font-size:18.46px;line-height:23px;color:#667a90;letter-spacing:-0.271px">Customer’s Name</div>
<div class="t" style="left:2229.70px;top:572.15px;font-size:19.48px;line-height:24px;color:#4a5c71;letter-spacing:-0.674px">No.  of Orders</div>
<div class="t" style="left:1770.30px;top:628.47px;font-size:18.84px;line-height:24px;color:#ffffff;letter-spacing:-0.336px;-webkit-text-stroke:0.34px #ffffff">Jane Coopler</div>
<div class="t" style="left:2372.59px;top:628.10px;font-size:21.95px;line-height:27px;color:#667a90">88</div>
<div class="t" style="left:1770.30px;top:685.67px;font-size:18.84px;line-height:24px;color:#ffffff;letter-spacing:-0.711px;-webkit-text-stroke:0.34px #ffffff">Mike Ross</div>
<div class="t" style="left:2372.59px;top:685.30px;font-size:21.95px;line-height:27px;color:#667a90">70</div>
<div class="t" style="left:1770.30px;top:742.87px;font-size:18.84px;line-height:24px;color:#ffffff;letter-spacing:-0.340px;-webkit-text-stroke:0.34px #ffffff">Stanley Howard</div>
<div class="t" style="left:2372.59px;top:742.50px;font-size:21.95px;line-height:27px;color:#667a90">66</div>
<div class="t" style="left:1770.30px;top:800.07px;font-size:18.84px;line-height:24px;color:#ffffff;letter-spacing:-0.239px;-webkit-text-stroke:0.34px #ffffff">Tony Stark</div>
<div class="t" style="left:2372.59px;top:799.70px;font-size:21.95px;line-height:27px;color:#667a90">64</div>
<div class="t" style="left:1770.30px;top:857.27px;font-size:18.84px;line-height:24px;color:#ffffff;letter-spacing:-0.543px;-webkit-text-stroke:0.34px #ffffff">Steve Rogers</div>
<div class="t" style="left:2372.59px;top:856.90px;font-size:21.95px;line-height:27px;color:#667a90">63</div>
<div class="t" style="left:1770.30px;top:914.47px;font-size:18.84px;line-height:24px;color:#ffffff;letter-spacing:-0.350px;-webkit-text-stroke:0.34px #ffffff">Natasha Romanoff</div>
<div class="t" style="left:2372.59px;top:914.10px;font-size:21.95px;line-height:27px;color:#667a90">55</div>
<div class="t" style="left:1770.30px;top:971.67px;font-size:18.84px;line-height:24px;color:#ffffff;letter-spacing:-0.403px;-webkit-text-stroke:0.34px #ffffff">Jessica Pearson</div>
<div class="t" style="left:2372.59px;top:971.30px;font-size:21.95px;line-height:27px;color:#667a90">48</div>
<div class="t" style="left:1770.30px;top:1028.87px;font-size:18.84px;line-height:24px;color:#ffffff;letter-spacing:-0.129px;-webkit-text-stroke:0.34px #ffffff">Louis Litt</div>
<div class="t" style="left:2372.59px;top:1028.50px;font-size:21.95px;line-height:27px;color:#667a90">40</div>
<div class="t" style="left:1770.30px;top:1086.07px;font-size:18.84px;line-height:24px;color:#ffffff;letter-spacing:-0.342px;-webkit-text-stroke:0.34px #ffffff">Spenser Hastings</div>
<div class="t" style="left:2372.59px;top:1085.70px;font-size:21.95px;line-height:27px;color:#667a90">36</div>
</div>
<div style="position:absolute;left:74.60px;top:188.00px;width:369.40px;height:345.00px;background:#ffffff;border:1px solid #e6eaee;border-radius:7px;box-sizing:border-box;box-shadow:0 8px 20px -4px rgba(20,32,48,0.12), 0 1px 2px rgba(20,32,48,0.05)"></div>
<div style="position:absolute;left:295.80px;top:230.40px;width:96.10px;height:13.40px;background:#eef1f3;border-radius:7px"></div>
<div style="position:absolute;left:295.80px;top:285.00px;width:96.10px;height:13.50px;background:#eef1f3;border-radius:7px"></div>
<div style="position:absolute;left:295.80px;top:339.00px;width:96.10px;height:13.40px;background:#eef1f3;border-radius:7px"></div>
<div style="position:absolute;left:295.80px;top:415.00px;width:96.10px;height:14.00px;background:#eef1f3;border-radius:7px"></div>
<div style="position:absolute;left:295.80px;top:473.50px;width:96.10px;height:14.20px;background:#eef1f3;border-radius:7px"></div>
<div style="position:absolute;left:93.00px;top:384.50px;width:332.80px;height:1.20px;background:#e9edf0"></div>
<svg style="position:absolute;left:396.70px;top:231.20px;overflow:visible" width="12.00" height="13.00" viewBox="396.70 231.20 12.00 13.00"><path d="M402.70 242.20 V233.20 M398.70 237.20 L402.70 233.20 L406.70 237.20" fill="none" stroke="#12a03e" stroke-width="1.8" stroke-linecap="round" stroke-linejoin="round"/></svg>
<svg style="position:absolute;left:396.70px;top:285.30px;overflow:visible" width="12.00" height="13.00" viewBox="396.70 285.30 12.00 13.00"><path d="M402.70 287.30 V296.30 M398.70 292.30 L402.70 296.30 L406.70 292.30" fill="none" stroke="#e0402f" stroke-width="1.8" stroke-linecap="round" stroke-linejoin="round"/></svg>
<svg style="position:absolute;left:396.70px;top:339.60px;overflow:visible" width="12.00" height="12.80" viewBox="396.70 339.60 12.00 12.80"><path d="M402.70 350.40 V341.60 M398.70 345.60 L402.70 341.60 L406.70 345.60" fill="none" stroke="#12a03e" stroke-width="1.8" stroke-linecap="round" stroke-linejoin="round"/></svg>
<svg style="position:absolute;left:396.70px;top:415.80px;overflow:visible" width="12.00" height="13.30" viewBox="396.70 415.80 12.00 13.30"><path d="M402.70 417.80 V427.10 M398.70 423.10 L402.70 427.10 L406.70 423.10" fill="none" stroke="#e0402f" stroke-width="1.8" stroke-linecap="round" stroke-linejoin="round"/></svg>
<svg style="position:absolute;left:396.70px;top:474.20px;overflow:visible" width="12.00" height="12.80" viewBox="396.70 474.20 12.00 12.80"><path d="M402.70 485.00 V476.20 M398.70 480.20 L402.70 476.20 L406.70 480.20" fill="none" stroke="#12a03e" stroke-width="1.8" stroke-linecap="round" stroke-linejoin="round"/></svg>
<div class="t" style="left:110.00px;top:225.65px;font-size:18.31px;line-height:23px;color:#5e7189;letter-spacing:-0.363px">Job Revenue</div>
<div class="t" style="left:110.00px;top:279.85px;font-size:18.31px;line-height:23px;color:#5e7189;letter-spacing:-0.380px">Expenses</div>
<div class="t" style="left:110.00px;top:334.45px;font-size:18.31px;line-height:23px;color:#5e7189;letter-spacing:-0.109px">Gross Profit</div>
<div class="t" style="left:110.00px;top:414.15px;font-size:18.31px;line-height:23px;color:#5e7189;letter-spacing:0.271px">Sub-total</div>
<div class="t" style="left:110.00px;top:472.79px;font-size:17.92px;line-height:22px;color:#1c2a3a;letter-spacing:0.151px;-webkit-text-stroke:0.57px #1c2a3a">Job Profit Margin (%)</div>
<div style="position:absolute;left:2464.70px;top:30.00px;width:360.30px;height:132.20px;background:#fbfbfc;border:1px solid #e4e8ec;border-radius:8px;box-sizing:border-box;box-shadow:0 8px 20px -4px rgba(20,32,48,0.12), 0 1px 2px rgba(20,32,48,0.05)"></div>
<svg style="position:absolute;left:2488.00px;top:48.00px;overflow:visible" width="30.00" height="28.00" viewBox="2488.00 48.00 30.00 28.00"><circle cx="2502.8" cy="61.5" r="10.8" fill="none" stroke="#7a889b" stroke-width="1.7"/><path d="M2497.8 62 L2501.3 65.5 L2507.8 58.5" fill="none" stroke="#5d6d80" stroke-width="1.8" stroke-linecap="round" stroke-linejoin="round"/></svg>
<div style="position:absolute;left:2528.10px;top:50.80px;width:271.40px;height:21.40px;background:#eef1f3;border-radius:11px"></div>
<div style="position:absolute;left:2490.30px;top:86.50px;width:170.50px;height:22.40px;background:#eef1f3;border-radius:11px"></div>
<div style="position:absolute;left:2673.50px;top:86.50px;width:126.00px;height:22.40px;background:#eef1f3;border-radius:11px"></div>
<div style="position:absolute;left:2490.30px;top:121.60px;width:105.90px;height:21.90px;background:#edf2f0;border-radius:11px"></div>
<div class="t" style="left:2503.00px;top:124.10px;font-size:15.30px;line-height:19px;color:#0e9a3b;letter-spacing:0.688px;-webkit-text-stroke:0.28px #0e9a3b">15 in stock</div>
<div style="position:absolute;left:2425.40px;top:636.50px;width:373.10px;height:344.10px;background:#ffffff;border:1px solid #e4e8ec;border-radius:7px;box-sizing:border-box;box-shadow:0 8px 20px -4px rgba(20,32,48,0.12), 0 1px 2px rgba(20,32,48,0.05)"></div>
<div style="position:absolute;left:2667.70px;top:731.50px;width:95.00px;height:18.50px;background:#edf2f0;border-radius:9px"></div>
<div style="position:absolute;left:2663.50px;top:786.50px;width:99.20px;height:18.50px;background:#edf2f0;border-radius:9px"></div>
<div style="position:absolute;left:2660.00px;top:841.00px;width:102.70px;height:18.60px;background:#edf2f0;border-radius:9px"></div>
<div style="position:absolute;left:2443.50px;top:890.00px;width:336.50px;height:1.20px;background:#e9edf0"></div>
<div class="t" style="left:2460.80px;top:674.54px;font-size:18.06px;line-height:23px;color:#1c2a3a;letter-spacing:0.196px;-webkit-text-stroke:0.58px #1c2a3a">Cost Item</div>
<div class="t" style="left:2460.80px;top:728.75px;font-size:18.90px;line-height:24px;color:#5e7189;letter-spacing:-0.466px">Labour</div>
<div class="t" style="left:2460.80px;top:783.45px;font-size:18.90px;line-height:24px;color:#5e7189;letter-spacing:-0.205px">Materials</div>
<div class="t" style="left:2460.80px;top:838.45px;font-size:18.90px;line-height:24px;color:#5e7189;letter-spacing:-0.580px">Service Fee</div>
<div class="t" style="left:2675.40px;top:733.73px;font-size:12.04px;line-height:15px;color:#0e9a3b;letter-spacing:-0.178px;-webkit-text-stroke:0.22px #0e9a3b">3% of total cost</div>
<div class="t" style="left:2671.20px;top:788.33px;font-size:12.04px;line-height:15px;color:#0e9a3b;letter-spacing:-0.322px;-webkit-text-stroke:0.22px #0e9a3b">17% of total cost</div>
<div class="t" style="left:2667.70px;top:843.33px;font-size:12.04px;line-height:15px;color:#0e9a3b;letter-spacing:-0.078px;-webkit-text-stroke:0.22px #0e9a3b">80% of total cost</div>
<div class="t" style="left:2460.80px;top:919.54px;font-size:18.06px;line-height:23px;color:#1c2a3a;letter-spacing:0.214px;-webkit-text-stroke:0.58px #1c2a3a">Total Selling Price</div>
<div class="t" style="left:2691.50px;top:919.54px;font-size:18.06px;line-height:23px;color:#1c2a3a;letter-spacing:0.294px;-webkit-text-stroke:0.58px #1c2a3a">R325.00</div>
<div style="position:absolute;left:4.80px;top:928.00px;width:468.60px;height:87.70px;background:#fbfbfc;border:1px solid #e6eaee;border-radius:7px;box-sizing:border-box;box-shadow:0 8px 20px -4px rgba(20,32,48,0.12), 0 1px 2px rgba(20,32,48,0.05)"></div>
<svg style="position:absolute;left:36.00px;top:941.00px;overflow:visible" width="30.00" height="30.00" viewBox="36.00 941.00 30.00 30.00"><g transform="translate(-0.4,1)"><path d="M40.2 967.6 L42 961.3 A11.6 11.6 0 1 1 46.4 965.6 Z" fill="none" stroke="#0f9b3a" stroke-width="1.9" stroke-linejoin="round"/><path d="M46.3 950.6 C45 951.6 44.6 953.3 45.5 955.3 C46.7 958 49.5 961 52.6 962.4 C54.6 963.3 56.3 962.9 57.3 961.7 L57.6 960.4 L54.6 958.9 L53.2 960.3 C51.3 959.5 49.2 957.6 48.3 955.7 L49.6 954.2 L48.2 951.1 Z" fill="#0f9b3a"/></g></svg>
<div class="t" style="left:72.30px;top:946.86px;font-size:14.83px;line-height:19px;color:#667a90;letter-spacing:-0.361px">WHATSAPP</div>
<div class="t" style="left:381.60px;top:946.86px;font-size:14.83px;line-height:19px;color:#a9b4c1;letter-spacing:-0.354px">1m ago</div>
<div class="t" style="left:42.20px;top:978.05px;font-size:18.31px;line-height:23px;color:#1c2a3a;letter-spacing:-0.229px">Job 1234 has been allocated to you.</div>
</body></html>
